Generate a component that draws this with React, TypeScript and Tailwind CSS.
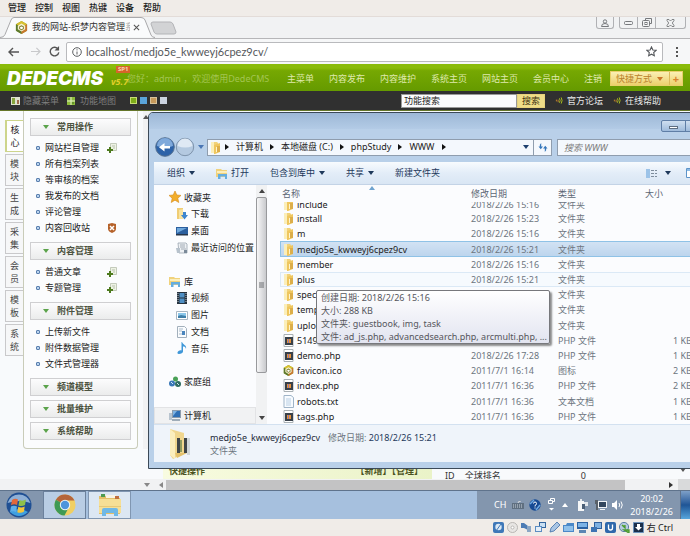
import React from "react";

const UI = "font-['Noto_Sans','Noto_Sans_CJK_SC',sans-serif]";

/* ---------- small drawings ---------- */

function Caret({ className = "" }: { className?: string }) {
  return (
    <svg viewBox="0 0 6 4" className={`h-[4px] w-[6px] shrink-0 ${className}`}>
      <path d="M0 0h6L3 4z" fill="currentColor" />
    </svg>
  );
}

function Crumb() {
  return (
    <svg viewBox="0 0 4 6" className="h-[6px] w-[4px] shrink-0">
      <path d="M0 0l4 3-4 3z" fill="#111" />
    </svg>
  );
}

function FolderIcon() {
  return (
    <svg viewBox="0 0 11 13" className="h-[13px] w-[11px] shrink-0">
      <path d="M1 1h6l1 1v10H1z" fill="#f1d27a" />
      <path d="M1 1h3v11H1z" fill="#fbeeb9" />
      <path d="M4 4l6-2v9l-5 2H4z" fill="#efc65e" />
      <path d="M7 5h3v6H7z" fill="#dcae4a" />
      <path d="M6 6h1v5H6z" fill="#fff4cc" />
    </svg>
  );
}

function PhpIcon() {
  return (
    <svg viewBox="0 0 11 13" className="h-[13px] w-[11px] shrink-0">
      <path d="M1 .5h9v12H1z" fill="#fff" stroke="#a9b0b4" />
      <path d="M2 3h8v8H2z" fill="#384049" />
      <path d="M4 5h4v4H4z" fill="#e6913a" />
      <path d="M5 5h1v4H5z" fill="#8e7cb0" />
    </svg>
  );
}

function TxtIcon() {
  return (
    <svg viewBox="0 0 11 13" className="h-[13px] w-[11px] shrink-0">
      <path d="M1 .5h7l2.500 2v10H1z" fill="#f7fbff" stroke="#9fb4c8" />
      <path d="M3 4h5M3 6h5M3 8h5M3 10h5" stroke="#b9cfe4" />
    </svg>
  );
}

function DedeIcon({ className = "w-[13px]" }: { className?: string }) {
  return (
    <svg viewBox="0 0 14 14" className={`h-[13px] shrink-0 ${className}`}>
      <path d="M7 0l6 3.500v7L7 14l-6-3.500v-7z" fill="#8b9a2b" />
      <path d="M7 0l6 3.500L7 7 1 3.500z" fill="#d8c130" />
      <path d="M1 3.500L7 7v7l-6-3.500z" fill="#5d7a2d" />
      <path d="M7 7l6-3.500v7L7 14z" fill="#c8782e" />
      <path d="M3 5l4-2.200L11 5v4l-4 2.300L3 9z" fill="#f6f1d0" />
      <path d="M4.500 6L7 4.500 9.500 6v2.500L7 10 4.500 8.500z" fill="#7b7d28" />
      <path d="M5.500 6.500L7 6l1.500.5v1.500L7 9l-1.500-1z" fill="#fff" />
    </svg>
  );
}

function StarIcon() {
  return (
    <svg viewBox="0 0 12 12" className="h-[12px] w-[12px] shrink-0">
      <path d="M6 0l1.800 4 4.200.4-3.200 2.800L9.800 11.500 6 9.200l-3.800 2.300 1-4.300L0 4.400 4.200 4z" fill="#f2ae2c" stroke="#d58a1a" strokeWidth=".6" />
    </svg>
  );
}

function DownloadIcon() {
  return (
    <svg viewBox="0 0 12 12" className="h-[12px] w-[12px] shrink-0">
      <path d="M1 0h6v11H1z" fill="#f0cd74" />
      <path d="M3 2l4-1v10H3z" fill="#f8e3a0" />
      <path d="M7 4h3v3h2L8.500 11.500 5 7h2z" fill="#3d86cf" />
    </svg>
  );
}

function DesktopIcon() {
  return (
    <svg viewBox="0 0 12 12" className="h-[12px] w-[12px] shrink-0">
      <path d="M0 2h12v8H0z" fill="#2c5f9e" />
      <path d="M1 3h10L1 8z" fill="#6fa8dc" />
      <path d="M0 9h12v1.500H0z" fill="#27364a" />
    </svg>
  );
}

function RecentIcon() {
  return (
    <svg viewBox="0 0 12 12" className="h-[12px] w-[12px] shrink-0">
      <path d="M2 1h8l1 1v9H3z" fill="#eef1f4" stroke="#9aa5b0" strokeWidth=".8" />
      <path d="M4 3h5M4 5h5M5 7h5" stroke="#8d99a6" strokeWidth=".8" />
      <path d="M0 6h4v5H1z" fill="#b7c2cc" />
      <path d="M8 8h3v3H8z" fill="#7b8a99" />
    </svg>
  );
}

function LibraryIcon() {
  return (
    <svg viewBox="0 0 12 12" className="h-[12px] w-[12px] shrink-0">
      <path d="M0 2h5l1 1h5v7H0z" fill="#f0d27c" />
      <path d="M1 4h10v2H1z" fill="#fbeebb" />
      <path d="M2 7h9v5H9V9.500H4.500V12H2z" fill="#64ade0" />
    </svg>
  );
}

function VideoIcon() {
  return (
    <svg viewBox="0 0 12 12" className="h-[12px] w-[12px] shrink-0">
      <path d="M1 0h10v12H1z" fill="#27333f" />
      <path d="M3.500 1h5v4.500h-5zM3.500 6.500h5V11h-5z" fill="#4f8fc4" />
      <path d="M2 1v10M10 1v10" stroke="#b9c4cd" strokeDasharray="1 1" />
    </svg>
  );
}

function PictureIcon() {
  return (
    <svg viewBox="0 0 12 12" className="h-[12px] w-[12px] shrink-0">
      <path d="M.5 2.500h11v8H.5z" fill="#fff" stroke="#a8b6c2" />
      <path d="M2 4h8v3H2z" fill="#8cc7ea" />
      <path d="M2 7l3-1 5 1v2H2z" fill="#3f7fa8" />
    </svg>
  );
}

function DocIcon() {
  return (
    <svg viewBox="0 0 12 12" className="h-[12px] w-[12px] shrink-0">
      <path d="M1.500.5h7l2 2v9h-9z" fill="#fafcfe" stroke="#a3b0bc" />
      <path d="M3 3h4M3 5h3M3 8h3" stroke="#a9bbcb" />
      <path d="M6 5h3v4H6z" fill="#4b85bd" />
    </svg>
  );
}

function MusicIcon() {
  return (
    <svg viewBox="0 0 12 12" className="h-[12px] w-[12px] shrink-0">
      <path d="M6 0c1 3 5 3 4 7-.3-2-1.500-2.500-3-2.500v5C7 11 5 12 3 12S1 10 2.500 9 5 8.300 5.500 8.500V0z" fill="#3f97d8" />
    </svg>
  );
}

function HomeGroupIcon() {
  return (
    <svg viewBox="0 0 12 12" className="h-[12px] w-[12px] shrink-0">
      <circle cx="6.500" cy="3" r="2.500" fill="#4aa157" />
      <circle cx="3" cy="7.500" r="3" fill="#3a78b8" />
      <circle cx="9" cy="8" r="3" fill="#2f6d62" />
      <path d="M2 6l2 2M8 7l2 2" stroke="#cfe6f5" />
    </svg>
  );
}

function ComputerIcon() {
  return (
    <svg viewBox="0 0 12 12" className="h-[12px] w-[12px] shrink-0">
      <path d="M3 0h9v8H3z" fill="#8b9cad" />
      <path d="M4 1h7v6H4z" fill="#2f6fb4" />
      <path d="M4 1h4L4 6z" fill="#7db2e2" />
      <path d="M0 3h3v7H0z" fill="#b8c4cf" />
      <path d="M3 9h8v2H3z" fill="#9fadb9" />
    </svg>
  );
}

function DocAddIcon() {
  return (
    <svg viewBox="0 0 10 10" className="h-[10px] w-[10px]">
      <path d="M3.500.5h6v7h-6z" fill="#eef3e4" stroke="#b7bfae" strokeWidth=".8" />
      <path d="M5 3h3M6 5h2" stroke="#b7c0ae" />
      <path d="M2 4h2v2h2v2H4v2H2V8H0V6h2z" fill="#4d7a1d" />
    </svg>
  );
}

function ShieldIcon() {
  return (
    <svg viewBox="0 0 10 10" className="h-[10px] w-[10px]">
      <path d="M1 1l4-1 4 1v5c0 2-2 3-4 4-2-1-4-2-4-4z" fill="#b5622a" />
      <path d="M3 3l4 4M7 3L3 7" stroke="#fff" strokeWidth="1.500" />
    </svg>
  );
}

function SoundIcon() {
  return (
    <svg viewBox="0 0 8 8" className="h-[7px] w-[8px] shrink-0" fill="none">
      <path d="M1 3v2M3 3v3" stroke="#d08b2c" />
      <path d="M4.500 1.500q1.500 2.500 0 5M6.500.5q2 3.500 0 7" stroke="#b7cf1c" />
    </svg>
  );
}

/* ---------- browser ---------- */

function MachineMenu() {
  return (
    <nav className="flex h-4 items-center gap-[9px] bg-[#f0ece8] pl-2 text-[9px] font-medium text-[#1c1c1c]">
      {["管理", "控制", "视图", "热键", "设备", "帮助"].map((t) => (
        <button key={t} className="leading-4">{t}</button>
      ))}
    </nav>
  );
}

function TabStrip() {
  return (
    <div className="flex h-[22px] items-start border-t border-[#e3dcd8] bg-[#f1f2f3]">
      <div className="relative h-[21px] w-[180px]">
        <svg viewBox="0 0 180 22" className="absolute inset-0 h-[22px] w-[180px]" fill="none">
          <path d="M0 20.500q4 0 5-3L11 3q1-2.500 3-2.500h127q3 0 4 2.500l6 15q1 2.500 4 2.500" fill="#fafbfc" stroke="#a9a9ab" />
          <path d="M153 5h17q2 0 3 2l3 8q0 2-2 2h-17q-2 0-3-2l-3-8q0-2 2-2z" fill="#d2d3d5" stroke="#b3b4b7" />
        </svg>
        <div className="relative flex h-5 items-center pl-[15px]">
          <DedeIcon />
          <span className="ml-1 w-[98px] overflow-hidden whitespace-nowrap text-[9px] text-[#333]">
            我的网站-织梦内容管理<span className="text-[#aaa]">系</span>
          </span>
          <button aria-label="关闭标签页" className="ml-[3px]">
            <svg viewBox="0 0 8 8" className="h-[7px] w-[7px]"><path d="M1 1l6 6M7 1L1 7" stroke="#555" strokeWidth="1.200" /></svg>
          </button>
        </div>
      </div>
      <div className="ml-auto flex gap-[5px] pr-1 text-[#77797c]">
        <button aria-label="用户" className="flex h-3 w-[18px] items-center justify-center rounded-b-[3px] border border-t-0 border-[#b0b1b4]">
          <svg viewBox="0 0 8 8" className="h-2 w-2" fill="none" stroke="currentColor"><circle cx="4" cy="2.500" r="1.700" /><path d="M.5 7.500q0-3 3.500-3t3.500 3z" /></svg>
        </button>
        <div className="flex h-3 rounded-b-[3px] border border-t-0 border-[#b0b1b4]">
          <button aria-label="最小化" className="flex w-[18px] items-center justify-center border-r border-[#b0b1b4]">
            <svg viewBox="0 0 9 4" className="h-1 w-[9px]" fill="none" stroke="currentColor"><rect x=".5" y=".5" width="8" height="3" rx="1" /></svg>
          </button>
          <button aria-label="还原" className="flex w-[18px] items-center justify-center border-r border-[#b0b1b4]">
            <svg viewBox="0 0 10 9" className="h-[9px] w-[10px]" fill="none" stroke="currentColor"><path d="M3.500 2.500v-2h6v5h-2" /><rect x=".5" y="2.500" width="7" height="6" rx="1" /><rect x="3" y="4.500" width="2" height="2" /></svg>
          </button>
          <button aria-label="关闭" className="flex w-[29px] items-center justify-center">
            <svg viewBox="0 0 9 8" className="h-2 w-[9px]" fill="none" stroke="currentColor" strokeWidth=".9"><path d="M1 .5h2L4.500 2 6 .5h2v1L6.300 4 8 6.500v1H6L4.500 6 3 7.500H1v-1L2.700 4 1 1.500z" /></svg>
          </button>
        </div>
      </div>
    </div>
  );
}

function AddressBar() {
  return (
    <div className="flex h-[26px] items-center border-t border-[#b6b6b8] bg-[#f6f7f8] pl-2">
      <button aria-label="后退" className="w-[22px]">
        <svg viewBox="0 0 12 10" className="h-[10px] w-[12px]" fill="none" stroke="#555" strokeWidth="1.400"><path d="M11 5H1M5 1L1 5l4 4" /></svg>
      </button>
      <button aria-label="前进" className="w-[19px]">
        <svg viewBox="0 0 12 10" className="h-[9px] w-[11px]" fill="none" stroke="#c8c9cb" strokeWidth="1.300"><path d="M1 5h10M7 1l4 4-4 4" /></svg>
      </button>
      <button aria-label="刷新" className="w-[17px]">
        <svg viewBox="0 0 12 12" className="h-[11px] w-[11px]" fill="none" stroke="#555" strokeWidth="1.500"><path d="M10 3.500A4.700 4.700 0 1 0 10.700 7" /><path d="M11 0v5H6z" fill="#555" stroke="none" /></svg>
      </button>
      <div className="flex h-5 flex-1 items-center rounded-[2px] border border-[#b9babd] bg-white px-[5px]">
        <svg viewBox="0 0 10 10" className="h-[10px] w-[10px]" fill="none" stroke="#5c5f62"><circle cx="5" cy="5" r="4.300" /><path d="M5 4.500v3M5 2.300v1.100" /></svg>
        <input aria-label="地址" defaultValue="localhost/medjo5e_kwweyj6cpez9cv/" className="ml-1 min-w-0 flex-1 bg-transparent font-['Lato',sans-serif] text-[11px] leading-4 text-[#55585c] outline-none" />
        <button aria-label="收藏">
          <svg viewBox="0 0 12 12" className="h-[11px] w-[11px]" fill="none" stroke="#55585c" strokeWidth="1.200"><path d="M6 1l1.500 3.300 3.500.4-2.600 2.400.7 3.600L6 9 2.900 10.700l.7-3.600L1 4.700l3.500-.4z" /></svg>
        </button>
      </div>
      <button aria-label="更多" className="flex w-[27px] justify-center">
        <svg viewBox="0 0 2 10" className="h-[10px] w-[2px]" fill="#555"><path d="M0 0h2v2H0zM0 4h2v2H0zM0 8h2v2H0z" /></svg>
      </button>
    </div>
  );
}

/* ---------- DedeCMS ---------- */

function CmsHeader() {
  return (
    <header className="flex h-[27px] items-center bg-linear-to-b from-[#8abb0a] from-15% via-[#76a802] via-25% to-[#659a00] pt-[2px] pr-[7px] pl-[7px] text-[9px]">
      <div className="relative flex w-[120px] items-end">
        <span className="font-['Inter',sans-serif] text-[19px] leading-5 font-black text-white italic">DEDECMS</span>
        <span className="absolute top-[7px] left-[104px] text-[9px] leading-3 font-bold text-[#e2cf2a] italic">v5.7</span>
        <span className="absolute -top-[3px] left-[109px] bg-[#d8642b] px-[2px] text-[6px] leading-[7px] font-bold text-[#f7d9b0]">SP1</span>
      </div>
      <span className="whitespace-nowrap text-[#a3c552]">您好：admin ，欢迎使用DedeCMS</span>
      <nav className="ml-auto flex gap-[15px] whitespace-nowrap text-[#dfe9ac]">
        {["主菜单", "内容发布", "内容维护", "系统主页", "网站主页", "会员中心", "注销"].map((t) => (
          <a key={t} href="#">{t}</a>
        ))}
      </nav>
      <div className="ml-2 flex h-[15px] items-center border border-[#e9cf6b] bg-linear-to-b from-[#fbf0b4] to-[#ecd06c] text-[#b9812c]">
        <button className="flex h-full items-center gap-[5px] pr-[6px] pl-[5px]">快捷方式<Caret className="text-[#c9772a]" /></button>
        <button className="h-full w-[13px] border-l border-[#dcb95a] text-[11px] leading-3 font-bold text-[#d9822c]">+</button>
      </div>
    </header>
  );
}

function CmsSubBar() {
  return (
    <div className="flex h-5 items-center border-b border-[#64762a] bg-[#303030] pr-[29px] pl-[11px] text-[9px] whitespace-nowrap">
      <svg viewBox="0 0 9 8" className="h-2 w-[9px]"><path d="M0 0h9v8H0z" fill="#dfe3cf" /><path d="M1 1h3v6H1z" fill="#86a53d" /><path d="M6 3h2v4H6z" fill="#a06c4c" /></svg>
      <button className="ml-[3px] text-[#7f7f7f]">隐藏菜单</button>
      <svg viewBox="0 0 8 8" className="ml-2 h-2 w-2"><path d="M0 0h8v8H0z" fill="#8cbb3a" /><path d="M4 0v8M0 4h8" stroke="#e5efca" /><path d="M2 1v2M6 5v2" stroke="#3f6f1a" /></svg>
      <button className="ml-[5px] text-[#7f7f7f]">功能地图</button>
      <div className="ml-[14px] flex gap-[3px]">
        <button aria-label="绿色" className="h-[7px] w-[7px] border border-[#c7de72] bg-[#7fae18]" />
        <button aria-label="蓝色" className="h-[7px] w-[7px] bg-[#5aa4da]" />
        <button aria-label="橙色" className="h-[7px] w-[7px] border border-[#d8c29a] bg-[#c79a5a]" />
        <button aria-label="灰色" className="h-[7px] w-[7px] bg-[#ccd4e0]" />
      </div>
      <form className="ml-auto flex h-[14px]" onSubmit={(e) => e.preventDefault()}>
        <input aria-label="功能搜索" defaultValue="功能搜索" className="w-[116px] border border-[#999] bg-[#fbfbfd] pl-[2px] text-[9px] text-[#222] outline-none" />
        <button className="w-7 border border-[#e7d27c] bg-[#efdd88] text-[9px] leading-3 text-[#3a3010]">搜索</button>
      </form>
      <a href="#" className="ml-[10px] flex items-center gap-1 text-[#e9e9e9]"><SoundIcon />官方论坛</a>
      <a href="#" className="ml-[10px] flex items-center gap-1 text-[#e9e9e9]"><SoundIcon />在线帮助</a>
    </div>
  );
}

function SideTabs() {
  const tabs = ["核心", "模块", "生成", "采集", "会员", "模板", "系统"];
  return (
    <div className="mt-[9px] flex w-[18px] flex-col gap-[2px]">
      {tabs.map((t, i) => (
        <button
          key={t}
          className={`flex h-8 flex-col items-center justify-center border border-r-0 text-[9px] leading-[13px] ${
            i === 0 ? "border-[#cdd58c] border-l-2 bg-white text-[#222]" : "border-[#c9c9cb] bg-[#f6f7f8] text-[#444]"
          }`}
        >
          <span>{t[0]}</span>
          <span>{t[1]}</span>
        </button>
      ))}
    </div>
  );
}

type Entry = { text: string; mark?: "doc" | "shield" };
const groups: { title: string; items: Entry[] }[] = [
  {
    title: "常用操作",
    items: [
      { text: "网站栏目管理", mark: "doc" },
      { text: "所有档案列表" },
      { text: "等审核的档案" },
      { text: "我发布的文档" },
      { text: "评论管理" },
      { text: "内容回收站", mark: "shield" },
    ],
  },
  { title: "内容管理", items: [{ text: "普通文章", mark: "doc" }, { text: "专题管理", mark: "doc" }] },
  { title: "附件管理", items: [{ text: "上传新文件" }, { text: "附件数据管理" }, { text: "文件式管理器" }] },
  { title: "频道模型", items: [] },
  { title: "批量维护", items: [] },
  { title: "系统帮助", items: [] },
];

function SideMenu() {
  return (
    <aside className="flex w-[115px] flex-col gap-1 self-start rounded-b-[4px] border border-t-0 border-[#c9ccb9] bg-[#fbfcfd] px-[6px] pt-[7px] pb-2 text-[9px]">
      {groups.map((g) => (
        <section key={g.title}>
          <h2 className="flex h-[18px] items-center border border-[#cfcfd1] bg-linear-to-b from-[#fcfcfd] to-[#ebecec] pl-3 font-bold text-[#4c5340]">
            <Caret className="mr-2 h-[3px] w-[5px] text-[#5ba34b]" />
            {g.title}
          </h2>
          {g.items.length > 0 && (
            <ul className="pt-1 pb-[2px]">
              {g.items.map((it) => (
                <li key={it.text} className="flex h-4 items-center pl-[6px]">
                  <span className="mr-[5px] h-1 w-1 rounded-[1px] border border-[#5a7fae] bg-[#b9d3ee]" />
                  <a href="#" className="text-[#222]">{it.text}</a>
                  {it.mark && <span className="mr-[14px] ml-auto">{it.mark === "doc" ? <DocAddIcon /> : <ShieldIcon />}</span>}
                </li>
              ))}
            </ul>
          )}
        </section>
      ))}
    </aside>
  );
}

/* ---------- file explorer ---------- */

function ExplorerAddress() {
  return (
    <div className="flex items-center pt-2 pr-2 pb-[5px] pl-[6px]">
      <button aria-label="后退">
        <svg viewBox="0 0 20 20" className="h-5 w-5"><circle cx="10" cy="10" r="9.300" fill="#2d62a8" stroke="#57718f" /><path d="M2 9a8 8 0 0 1 16 0q-8 3-16 0z" fill="#7fa9db" /><path d="M15 9v2.500H9.500v3L4 10.200 9.500 6v3z" fill="#fff" /></svg>
      </button>
      <button aria-label="前进">
        <svg viewBox="0 0 20 20" className="h-5 w-5"><circle cx="10" cy="10" r="8.700" fill="#b4c9e0" stroke="#7e93ab" /><path d="M2.500 9a7.500 7.500 0 0 1 15 0q-7 3-15 0z" fill="#dfe9f4" /></svg>
      </button>
      <button aria-label="最近" className="ml-[3px] text-[#4a76b4]"><Caret /></button>
      <div className="ml-[3px] flex h-[17px] flex-1 items-center border border-[#8f9dae] bg-[#f4f8fd] pl-[2px] text-[#222]">
        <FolderIcon />
        <div className="ml-1 flex flex-1 items-center gap-[7px] whitespace-nowrap">
          <Crumb /><button>计算机</button><Crumb /><button>本地磁盘 (C:)</button><Crumb /><button>phpStudy</button><Crumb /><button>WWW</button><Crumb />
        </div>
        <Caret className="mr-1 text-[#1d3f6e]" />
        <button aria-label="刷新" className="flex h-full w-[18px] items-center justify-center border-l border-[#8f9dae]">
          <svg viewBox="0 0 10 10" className="h-[9px] w-[10px]"><path d="M3 0v4h2L2.500 7 0 4h1.500V2zM7 10V6H5l2.500-3L10 6H8.500v2z" fill="#3677bb" /></svg>
        </button>
      </div>
      <input aria-label="搜索" placeholder="搜索 WWW" className="ml-[5px] h-[17px] w-[184px] border border-[#8f9dae] bg-[#f4f8fd] pl-[6px] text-[9px] italic outline-none placeholder:text-[#777]" />
    </div>
  );
}

function ExplorerToolbar() {
  return (
    <div className="flex h-[23px] items-center border-b border-[#c3d3e6] bg-linear-to-b from-[#f8fbfe] via-[#e3edf8] to-[#d9e6f4] pl-[13px] whitespace-nowrap text-[#1e395b]">
      <button className="flex items-center gap-1">组织<Caret /></button>
      <button className="ml-[21px] flex items-center gap-[3px]"><LibraryIcon />打开</button>
      <button className="ml-[21px] flex items-center gap-1">包含到库中<Caret /></button>
      <button className="ml-[21px] flex items-center gap-1">共享<Caret /></button>
      <button className="ml-[21px]">新建文件夹</button>
      <div className="ml-auto flex items-center pr-[45px]">
        <button aria-label="视图" className="flex items-center gap-2">
          <svg viewBox="0 0 11 9" className="h-[9px] w-[11px]"><path d="M0 0h4v9H0z" fill="#9cc3e8" /><path d="M5 1.500h3M5 4.500h3M5 7.500h3M9 1.500h2M9 4.500h2M9 7.500h2" stroke="#7d8c9c" /></svg>
          <Caret />
        </button>
        <button aria-label="预览窗格" className="ml-[15px]">
          <svg viewBox="0 0 13 10" className="h-[10px] w-[13px]"><path d="M.5.5h12v9H.5z" fill="#fff" stroke="#5d94c9" /><path d="M1 1h11v2H1z" fill="#8dbbe5" /></svg>
        </button>
      </div>
    </div>
  );
}

const navRows: ({ icon: React.ReactNode; text: string; child?: boolean; active?: boolean } | null)[] = [
  { icon: <StarIcon />, text: "收藏夹" },
  { icon: <DownloadIcon />, text: "下载", child: true },
  { icon: <DesktopIcon />, text: "桌面", child: true },
  { icon: <RecentIcon />, text: "最近访问的位置", child: true },
  null,
  { icon: <LibraryIcon />, text: "库" },
  { icon: <VideoIcon />, text: "视频", child: true },
  { icon: <PictureIcon />, text: "图片", child: true },
  { icon: <DocIcon />, text: "文档", child: true },
  { icon: <MusicIcon />, text: "音乐", child: true },
  null,
  { icon: <HomeGroupIcon />, text: "家庭组" },
  null,
  { icon: <ComputerIcon />, text: "计算机", active: true },
];

function NavPane() {
  return (
    <div className="flex w-[113px]">
      <ul className="flex min-w-0 flex-1 flex-col pt-1">
        {navRows.map((r, i) => (
          <li
            key={i}
            className={`flex flex-1 items-center gap-[3px] whitespace-nowrap text-[#222] ${r?.child ? "pl-[22px]" : "pl-[15px]"} ${r?.active ? "bg-[#f1f2f3] outline outline-[#e2e3e5] -outline-offset-1" : ""}`}
          >
            {r?.icon}
            {r?.text}
          </li>
        ))}
      </ul>
      <div className="flex w-[11px] flex-col items-center bg-[#f1f2f3] text-[#444]">
        <Caret className="my-1 rotate-180" />
        <div className="flex h-[176px] w-full items-center justify-center rounded-[2px] border border-[#98999c] bg-linear-to-r from-[#f7f7f8] to-[#c9cacd]">
          <svg viewBox="0 0 5 6" className="h-[6px] w-[5px]"><path d="M0 1h5M0 3h5M0 5h5" stroke="#6b6c70" /></svg>
        </div>
        <Caret className="mt-auto mb-1" />
      </div>
    </div>
  );
}

type FileRow = { name: string; date: string; type: string; size?: string; kind: "dir" | "php" | "ico" | "txt" };
const files: FileRow[] = [
  { name: "include", date: "2018/2/26 15:16", type: "文件夹", kind: "dir" },
  { name: "install", date: "2018/2/26 15:23", type: "文件夹", kind: "dir" },
  { name: "m", date: "2018/2/26 15:16", type: "文件夹", kind: "dir" },
  { name: "medjo5e_kwweyj6cpez9cv", date: "2018/2/26 15:21", type: "文件夹", kind: "dir" },
  { name: "member", date: "2018/2/26 15:16", type: "文件夹", kind: "dir" },
  { name: "plus", date: "2018/2/26 15:21", type: "文件夹", kind: "dir" },
  { name: "spec", date: "", type: "文件夹", kind: "dir" },
  { name: "temp", date: "", type: "文件夹", kind: "dir" },
  { name: "uplo", date: "", type: "文件夹", kind: "dir" },
  { name: "5149", date: "", type: "PHP 文件", size: "1 KB", kind: "php" },
  { name: "demo.php", date: "2018/2/26 17:28", type: "PHP 文件", size: "1 KB", kind: "php" },
  { name: "favicon.ico", date: "2011/7/1 16:14", type: "图标", size: "2 KB", kind: "ico" },
  { name: "index.php", date: "2011/7/1 16:36", type: "PHP 文件", size: "2 KB", kind: "php" },
  { name: "robots.txt", date: "2011/7/1 16:36", type: "文本文档", size: "1 KB", kind: "txt" },
  { name: "tags.php", date: "2011/7/1 16:36", type: "PHP 文件", size: "1 KB", kind: "php" },
];

const kindIcon = { dir: <FolderIcon />, php: <PhpIcon />, ico: <DedeIcon className="w-[11px]" />, txt: <TxtIcon /> };

function FileTable() {
  return (
    <div className="relative min-w-0 flex-1 overflow-hidden pl-[13px]">
      <Caret className="absolute top-px left-[102px] rotate-180 text-[#6fa3cf]" />
      <table className="h-full w-full table-fixed border-collapse text-left leading-[13px] text-[#6d7580]">
        <colgroup>
          <col className="w-[191px]" />
          <col className="w-[87px]" />
          <col className="w-[87px]" />
          <col />
        </colgroup>
        <thead>
          <tr className="h-[17px] text-[#5b6675]">
            <th className="p-0 pl-[2px] font-normal">名称</th>
            <th className="p-0 font-normal">修改日期</th>
            <th className="p-0 font-normal">类型</th>
            <th className="p-0 font-normal">大小</th>
          </tr>
        </thead>
        <tbody>
          {files.map((f, i) => {
            if (i === 0) {
              return (
                <tr key={f.name} className="h-[9px] align-top">
                  <td className="p-0"><div className="flex h-[9px] items-end gap-[3px] overflow-hidden pl-[3px] text-[#222]">{kindIcon[f.kind]}{f.name}</div></td>
                  <td className="p-0"><div className="flex h-[9px] items-end overflow-hidden">{f.date}</div></td>
                  <td className="p-0"><div className="flex h-[9px] items-end overflow-hidden">{f.type}</div></td>
                  <td className="p-0" />
                </tr>
              );
            }
            const tone =
              i === 3
                ? "bg-linear-to-b from-[#d3e3f4] to-[#bdd5ed] outline outline-[#8fc2e6] -outline-offset-1"
                : i === 5
                  ? "bg-[#f6fafe] outline outline-[#dbe9f6] -outline-offset-1"
                  : "";
            return (
              <tr key={f.name} className={tone}>
                <td className="p-0"><div className="flex items-center gap-[3px] pl-[3px] text-[#222]">{kindIcon[f.kind]}{f.name}</div></td>
                <td className="p-0">{f.date}</td>
                <td className="p-0">{f.type}</td>
                <td className="p-0 pl-7">{f.size}</td>
              </tr>
            );
          })}
        </tbody>
      </table>
    </div>
  );
}

function Tooltip() {
  return (
    <div role="tooltip" className="absolute top-[177px] left-[167px] w-[234px] rounded-[2px] border border-[#77787c] bg-linear-to-b from-white to-[#e2e4f0] px-1 leading-[13px] whitespace-nowrap text-[#55565c] shadow-[2px_2px_2px_rgba(0,0,0,0.45)]">
      <p>创建日期: 2018/2/26 15:16</p>
      <p>大小: 288 KB</p>
      <p>文件夹: guestbook, img, task</p>
      <p>文件: ad_js.php, advancedsearch.php, arcmulti.php, ...</p>
    </div>
  );
}

function Explorer() {
  return (
    <div className="absolute top-px -right-[60px] bottom-[21px] left-[148px] flex flex-col rounded-t-[5px] border border-[#3c4a58] bg-[#b9d0e9] text-[9px]">
      <div className="flex h-4 justify-end rounded-t-[4px] bg-linear-to-b from-[#9db8d6] to-[#b3cbe6] pr-[6px]">
        <div className="mt-[7px] flex h-3 rounded-[2px] border border-[#5f7ea6] bg-linear-to-b from-[#cfdff0] to-[#9fbbdb]">
          <button aria-label="最小化" className="flex w-6 items-end justify-center border-r border-[#5f7ea6] pb-[2px]"><span className="h-[3px] w-[9px] border border-[#5f6f82] bg-white" /></button>
          <button aria-label="最大化" className="w-6 border-r border-[#5f7ea6]" />
          <button aria-label="关闭" className="w-8 bg-[#c4574a]" />
        </div>
      </div>
      <ExplorerAddress />
      <div className="mx-[5px] mb-[6px] flex min-h-0 flex-1 flex-col bg-[#fbfcfe]">
        <ExplorerToolbar />
        <div className="flex min-h-0 flex-1">
          <NavPane />
          <FileTable />
        </div>
        <div className="flex h-[38px] items-center border-t border-[#d3e1f0] bg-[#eff4fa] pl-4">
          <svg viewBox="0 0 24 30" className="h-[30px] w-6 shrink-0">
            <path d="M0 0l14 4v20L3 30 0 26z" fill="#f0d68e" />
            <path d="M0 0l5 4v26l-5-4z" fill="#fbeebd" />
            <path d="M7 9h3v15H7zM14 9h3v15h-3z" fill="#3f4547" />
            <path d="M10 11h2v12h-2z" fill="#8d9a5f" />
            <path d="M17 9h3v17h-3z" fill="#cfd6d9" />
            <path d="M5 24l12 0-10 5z" fill="#e3c06b" />
          </svg>
          <div className="ml-4 leading-[13px] text-[#6d7580]">
            <p><span className="mr-2 text-[#1e2b3b]">medjo5e_kwweyj6cpez9cv</span>修改日期: <span className="text-[#1e395b]">2018/2/26 15:21</span></p>
            <p>文件夹</p>
          </div>
        </div>
      </div>
      <Tooltip />
    </div>
  );
}

/* ---------- page, taskbar, status ---------- */

function PageBottom() {
  return (
    <div className="flex h-[22px] flex-col text-[9px]">
      <div className="flex h-[11px] items-center overflow-hidden pl-[163px] leading-[6px] whitespace-nowrap">
        <div className="flex h-full w-[269px] items-start bg-linear-to-r from-[#f8fbe0] to-[#eaf3c8] pr-[9px] pl-[6px] font-bold text-[#4a5220]">
          <span>快捷操作</span>
          <span className="ml-auto">【新增】【管理】</span>
        </div>
        <div className="flex h-full flex-1 items-end pl-[13px] text-[#333]">
          <span>ID</span>
          <span className="ml-[10px]">全球排名</span>
          <span className="ml-20">0</span>
          <Caret className="mr-1 mb-[7px] ml-auto text-[#555]" />
        </div>
      </div>
      <div className="flex flex-1 items-center bg-[#f1f2f3] pl-[144px] text-[#888]">
        <Caret />
        <Caret className="ml-2 rotate-90" />
        <div className="ml-[2px] h-[10px] w-[459px] bg-[#c3c3c4]" />
        <Caret className="mr-1 ml-auto -rotate-90 text-[#333]" />
        <div className="h-full w-3 bg-[#d9dadb]" />
      </div>
    </div>
  );
}

function Taskbar() {
  return (
    <div className="flex h-[29px] items-stretch border-t border-[#5f738c] bg-[#a6c0de] text-[9px] text-white">
      <button aria-label="开始" className="flex w-[43px] items-center bg-[#8396ae] pl-[6px]">
        <svg viewBox="0 0 26 26" className="h-[26px] w-[26px]">
          <circle cx="13" cy="13" r="12.500" fill="#1f4f93" />
          <path d="M1.500 11a12 12 0 0 1 23 0q-11-4-23 0z" fill="#8fb0d6" />
          <path d="M4 20q9-6 18 0-9 8-18 0z" fill="#3fa0e0" />
          <path d="M6 8q3-2 6-.5L11 13q-3-1.500-6 .3z" fill="#e2683a" />
          <path d="M13.500 8q3 1.500 6.500-.5L19 13q-3 1.800-6.500.5z" fill="#8fc04a" />
          <path d="M5 14.500q3-1.500 6 0L10 20q-3-1.500-6 .2z" fill="#5fb0ea" />
          <path d="M12.300 14.700q3 1.500 6.400-.3L18 19.500q-3 2-6.700.7z" fill="#f4c63a" />
        </svg>
      </button>
      <button aria-label="Chrome" className="flex w-[43px] items-center justify-center border border-[#6c819c] bg-[#b9cde4]">
        <svg viewBox="0 0 22 22" className="h-[22px] w-[22px]">
          <circle cx="11" cy="11" r="10.500" fill="#f0cf62" />
          <path d="M11 11L1.900 5.700A10.500 10.500 0 0 1 20.500 6.500H11z" fill="#b5653a" />
          <path d="M11 11L1.900 5.700A10.500 10.500 0 0 0 10.500 21.500L15 13z" fill="#3f9a55" />
          <circle cx="11" cy="11" r="5.200" fill="#eef3f7" />
          <circle cx="11" cy="11" r="4.200" fill="#4d94dc" />
        </svg>
      </button>
      <button aria-label="资源管理器" className="ml-[2px] flex w-[43px] items-center justify-center border border-[#8096b1] bg-[#dce7f3]">
        <svg viewBox="0 0 24 22" className="h-[22px] w-6">
          <path d="M1 2h8l1 2h12v16H1z" fill="#e3bf68" />
          <path d="M3 0h4v3H3z" fill="#4d9a52" />
          <path d="M8 1h10v3H8z" fill="#f8f3e4" />
          <path d="M17 2h4v3h-4z" fill="#bf6f40" />
          <path d="M1 5h22v14H1z" fill="#f6df96" />
          <path d="M1 12h22v1H1z" fill="#e6c978" />
          <path d="M4 22v-6q0-2 2-2h12q2 0 2 2v6h-4v-3H8v3z" fill="#6fb8e6" />
        </svg>
      </button>
      <div className="ml-auto flex w-[213px] items-center bg-[#8396ae] pl-[17px]">
        <span>CH</span>
        <svg viewBox="0 0 12 8" className="ml-[6px] h-2 w-3"><path d="M0 2h12v6H0z" fill="#5f6f80" /><path d="M1 4h10M1 6h10" stroke="#ccd5dd" strokeDasharray="1 1" /><path d="M6 2q0-2 3-2" stroke="#ddd" fill="none" /></svg>
        <svg viewBox="0 0 12 12" className="ml-[5px] h-3 w-3"><circle cx="6" cy="6" r="5.700" fill="#174a94" /><path d="M1 5l4-4M7 11l4-5" stroke="#6fa9e2" strokeWidth="1.500" /><path d="M4.500 4.500q0-1.500 1.500-1.500t1.500 1.500T6 6.500v1M6 8.500v1" stroke="#fff" fill="none" /></svg>
        <svg viewBox="0 0 7 14" className="ml-[7px] h-[14px] w-[7px]" fill="none" stroke="#fff"><path d="M2.500 2.500v-2h4v3h-2M.5 2.500h4v3h-4z" /><path d="M1 10h5L3.500 12.500z" fill="#fff" stroke="none" /></svg>
        <Caret className="ml-[7px] rotate-180" />
        <svg viewBox="0 0 11 12" className="ml-[9px] h-3 w-[11px]"><path d="M1 2h6v10H1z" fill="#f5f6f7" /><path d="M3 0h2v2H3zM7 3h4v4H7z" fill="#e2e7ec" /><path d="M5 5h3v5H5z" fill="#4b5f76" /></svg>
        <svg viewBox="0 0 12 12" className="ml-[7px] h-3 w-3"><path d="M3 2h9v7H3z" fill="#f1f3f5" /><path d="M4 3h7v5H4z" fill="#33465d" /><path d="M0 1h3v4H0zM1 5h2v6H1z" fill="#59616a" /><path d="M5 10h5v1H5z" fill="#f1f3f5" /></svg>
        <svg viewBox="0 0 12 10" className="ml-[5px] h-[10px] w-3" fill="none" stroke="#fff"><path d="M0 3h2l3-3v10L2 7H0z" fill="#fff" stroke="none" /><path d="M7 3q1.500 2 0 4M9 1.500q2.500 3.500 0 7" /></svg>
        <div className="mr-[7px] ml-auto text-center leading-[13px]">
          <p>20:02</p>
          <p>2018/2/26</p>
        </div>
        <button aria-label="显示桌面" className="h-full w-[10px] border-l border-[#5f738c] bg-linear-to-b from-[#7ea0c8] via-[#1f5596] to-[#58a6dc]" />
      </div>
    </div>
  );
}

function StatusBar() {
  const box = "h-[11px] w-[11px]";
  return (
    <footer className="flex h-[17px] items-center justify-end gap-[3px] bg-[#f0ece8] pr-[17px] text-[9px] text-[#222]">
      <svg viewBox="0 0 11 11" className={box}><rect width="11" height="11" rx="2" fill="#3f78b8" /><circle cx="5.500" cy="5" r="3.200" fill="#dbe8f4" /><path d="M8 2L3 9" stroke="#3f78b8" /></svg>
      <svg viewBox="0 0 11 11" className={box}><circle cx="5.500" cy="5.500" r="5" fill="#e8e6e4" stroke="#b9b6b3" /><circle cx="5.500" cy="5.500" r="1.500" fill="#fff" stroke="#b9b6b3" /></svg>
      <svg viewBox="0 0 11 11" className={box}><path d="M0 1h3l4 3v4L3 6H0z" fill="#4d7cb4" /><path d="M6 4h4v6H6z" fill="#8ba6c4" /></svg>
      <svg viewBox="0 0 11 11" className={box}><path d="M4 0h7v6H4z" fill="#33669f" /><path d="M5 1h5v4H5z" fill="#c9dff2" /><path d="M0 4h7v6H0z" fill="#5c8dc2" /><path d="M1 5h5v4H1z" fill="#e4eef8" /></svg>
      <svg viewBox="0 0 11 11" className={box}><path d="M1 10l1-4 6-6 3 3-6 6z" fill="#a9c5e3" stroke="#3f6fa8" strokeWidth=".8" /></svg>
      <svg viewBox="0 0 11 11" className={box}><path d="M0 3h3l1-2h7v9H0z" fill="#4a88c8" /><path d="M1 4h9v5H1z" fill="#8fc0ea" /></svg>
      <svg viewBox="0 0 11 11" className={box}><path d="M0 0h11v7H0z" fill="#2c62a3" /><path d="M1 1h9v4H1z" fill="#7db3e6" /><path d="M2 8h7v3H2z" fill="#5b86b3" /></svg>
      <svg viewBox="0 0 11 11" className={box}><path d="M3 0h8v7H3z" fill="#2f5f9c" /><path d="M4 1h6v5H4z" fill="#7fb1e1" /><path d="M0 5h6v5H0z" fill="#3d74b3" /></svg>
      <svg viewBox="0 0 11 11" className={box}><rect width="11" height="11" rx="2" fill="#2f68ab" /><path d="M3.500 2.500v3.500q0 2 2 2t2-2V2.500" stroke="#fff" strokeWidth="1.300" fill="none" /></svg>
      <svg viewBox="0 0 11 11" className={box}><circle cx="5" cy="5" r="4.600" fill="#b7cbdf" stroke="#5c7fa6" /><path d="M3 3l3 3 0-3M5 8h5v3z" stroke="#4c9a35" strokeWidth="1.300" fill="#7fc048" /></svg>
      <svg viewBox="0 0 11 11" className={box}><path d="M.5.5h10v10H.5z" fill="#1b2f4a" stroke="#6c93bd" /><path d="M4 2h3v3h2L5.500 8.500 2 5h2z" fill="#fff" /></svg>
      <span>右 Ctrl</span>
    </footer>
  );
}

export default function App() {
  return (
    <div className={`flex min-h-screen flex-col overflow-hidden bg-[#f8fafc] ${UI}`}>
      <MachineMenu />
      <TabStrip />
      <AddressBar />
      <CmsHeader />
      <CmsSubBar />
      <main className="relative flex flex-1 flex-col justify-between overflow-hidden">
        <div className="flex pl-[5px]">
          <SideTabs />
          <SideMenu />
          <div className="ml-[5px] w-[11px] bg-[#f1f2f3] pt-1 text-[#555]"><Caret className="rotate-180" /></div>
        </div>
        <PageBottom />
        <Explorer />
      </main>
      <Taskbar />
      <StatusBar />
    </div>
  );
}
